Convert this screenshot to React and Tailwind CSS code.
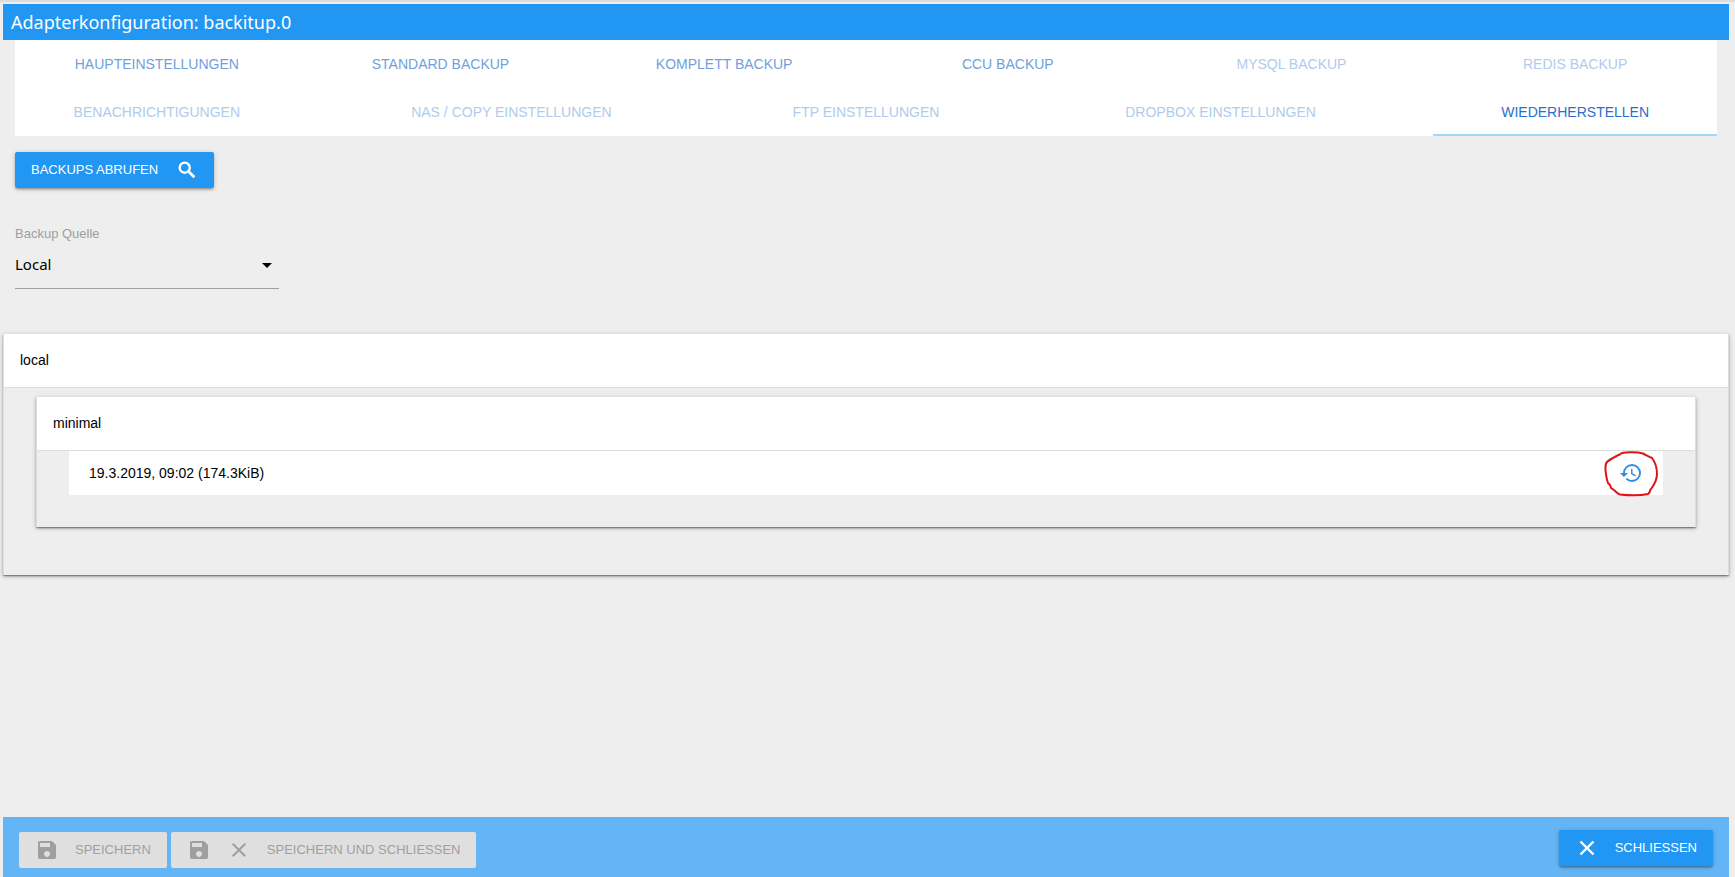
import React, { useState } from "react";
import { MdClose, MdHistory, MdSave } from "react-icons/md";

const TABS = [
  { id: "main", label: "Haupteinstellungen" },
  { id: "standard", label: "Standard Backup" },
  { id: "complete", label: "Komplett Backup" },
  { id: "ccu", label: "CCU Backup" },
  { id: "mysql", label: "MySQL Backup", disabled: true },
  { id: "redis", label: "Redis Backup", disabled: true },
  { id: "notify", label: "Benachrichtigungen", disabled: true },
  { id: "nas", label: "NAS / Copy Einstellungen", disabled: true },
  { id: "ftp", label: "FTP Einstellungen", disabled: true },
  { id: "dropbox", label: "Dropbox Einstellungen", disabled: true },
  { id: "restore", label: "Wiederherstellen" },
];

const tabColor = (tab, active) => {
  if (tab.id === active) return "text-[#2a70cb] border-[#a6d5fa]";
  if (tab.disabled) return "text-[#b0cbeb] border-transparent";
  return "text-[#70a0dc] border-transparent";
};

const SearchIcon = () => (
  <svg className="h-[22px] w-[22px]" viewBox="0 0 24 24" fill="none" stroke="currentColor">
    <circle cx="9.5" cy="9.5" r="5.5" strokeWidth="2.6" />
    <path d="M14 14l6 6" strokeWidth="3" />
  </svg>
);

const CloseIcon = () => (
  <svg className="h-6 w-6" viewBox="0 0 24 24" fill="none" stroke="currentColor">
    <path d="M5.500 5.500l13 13M18.500 5.500l-13 13" strokeWidth="2.400" />
  </svg>
);

const Tabs = ({ active, onSelect }) => (
  <nav className="mx-3 bg-white">
    <ul className="flex flex-wrap justify-between">
      {TABS.map((tab) => (
        <li key={tab.id} className="w-1/6">
          <a
            href={`#${tab.id}`}
            aria-disabled={tab.disabled}
            onClick={() => !tab.disabled && onSelect(tab.id)}
            className={`block h-12 border-b-2 text-center text-sm leading-12 uppercase whitespace-nowrap ${tabColor(tab, active)}`}
          >
            {tab.label}
          </a>
        </li>
      ))}
    </ul>
  </nav>
);

const Panel = ({ title, children }) => (
  <section className="border-x border-[#ddd] shadow-[0_2px_2px_0_rgba(0,0,0,0.14),0_3px_1px_-2px_rgba(0,0,0,0.12),0_1px_5px_0_rgba(0,0,0,0.2),0_1px_1px_0_rgba(0,0,0,0.2)]">
    <h2 className="flex h-[54px] items-center border-b border-[#ddd] bg-white px-4 pb-[2px] text-sm">
      {title}
    </h2>
    {children}
  </section>
);

const BackupRow = ({ label }) => (
  <div className="relative flex h-11 items-center justify-between bg-white px-5 text-sm">
    <span>{label}</span>
    <button type="button" aria-label="Wiederherstellen" className="text-[#2f8ee5]">
      <MdHistory size={24} />
    </button>
    <svg
      className="pointer-events-none absolute top-0 right-1 h-[46px] w-14"
      viewBox="0 0 56 46"
      fill="none"
      stroke="#e01217"
      strokeWidth="2"
      strokeLinejoin="round"
      strokeLinecap="round"
    >
      <path d="M19 2C14 5 7 8 4 11C2 13 2.500 17 2.500 19C3 24 3.500 28 5 32L7 34L8 37L11 39C13 41 15 43 17 43.500C26 44.500 38 44.500 45 43C48 41 46 40 48 38C51 34 54 28 54 23C54 16 52 11 49 7C46 6 43 4 40 2.500C34 1 24 1 19 2L16 4" />
    </svg>
  </div>
);

const App = () => {
  const [active, setActive] = useState("restore");
  const [source, setSource] = useState("local");

  return (
    <div className="flex min-h-screen flex-col border-t-2 border-[#ddd] bg-[#eee] px-[3px] pt-[2px] pr-[6px] font-['Liberation_Sans',Arial,sans-serif] text-black">
      <header className="flex h-9 items-center bg-[#2196f3] px-2">
        <h1 className="font-['Noto_Sans','Open_Sans',sans-serif] text-lg text-white">
          Adapterkonfiguration: backitup.0
        </h1>
      </header>

      <Tabs active={active} onSelect={setActive} />

      <main className="flex grow flex-col">
        <div className="mx-3 mt-4">
          <button
            type="button"
            className="flex h-9 items-center gap-[18px] rounded-xs bg-[#2196f3] px-4 text-[13px] text-white uppercase shadow-[0_2px_2px_0_rgba(0,0,0,0.14),0_3px_1px_-2px_rgba(0,0,0,0.12),0_1px_5px_0_rgba(0,0,0,0.2)]"
          >
            Backups abrufen
            <SearchIcon />
          </button>
        </div>

        <div className="mx-3 mt-9 w-[264px]">
          <label htmlFor="source" className="block text-[13px] leading-5 text-[#9e9e9e]">
            Backup Quelle
          </label>
          <div className="relative">
            <select
              id="source"
              value={source}
              onChange={(e) => setSource(e.target.value)}
              className="h-[45px] w-full appearance-none border-b border-[#9e9e9e] bg-transparent pb-1 font-['Noto_Sans','Open_Sans',sans-serif] text-[15px] outline-none"
            >
              <option value="local">Local</option>
              <option value="nas">NAS</option>
            </select>
            <svg
              className="pointer-events-none absolute top-[19px] right-[7px] h-[5px] w-[10px]"
              viewBox="0 0 10 5"
            >
              <path d="M0 0h10L5 5z" />
            </svg>
          </div>
        </div>

        <div className="mt-[45px]">
          <Panel title="local">
            <div className="px-8 pt-[9px] pb-12">
              <Panel title="minimal">
                <div className="px-8 pb-8">
                  <BackupRow label="19.3.2019, 09:02 (174.3KiB)" />
                </div>
              </Panel>
            </div>
          </Panel>
        </div>
      </main>

      <footer className="flex h-15 items-center justify-between bg-[#64b5f6] px-4 pt-[2px] text-[13px]">
        <div className="flex gap-1 pt-1">
          <button
            type="button"
            disabled
            className="flex h-9 items-center gap-4 rounded-xs bg-[#dfdfdf] px-4 text-[#9f9f9f] uppercase"
          >
            <MdSave size={24} />
            Speichern
          </button>
          <button
            type="button"
            disabled
            className="flex h-9 items-center gap-4 rounded-xs bg-[#dfdfdf] px-4 text-[#9f9f9f] uppercase"
          >
            <MdSave size={24} />
            <MdClose size={24} />
            Speichern und schliessen
          </button>
        </div>
        <button
          type="button"
          className="flex h-9 items-center gap-4 rounded-xs bg-[#2196f3] px-4 text-white uppercase shadow-[0_2px_2px_0_rgba(0,0,0,0.14),0_3px_1px_-2px_rgba(0,0,0,0.12),0_1px_5px_0_rgba(0,0,0,0.2)]"
        >
          <CloseIcon />
          Schliessen
        </button>
      </footer>
    </div>
  );
};

export default App;
